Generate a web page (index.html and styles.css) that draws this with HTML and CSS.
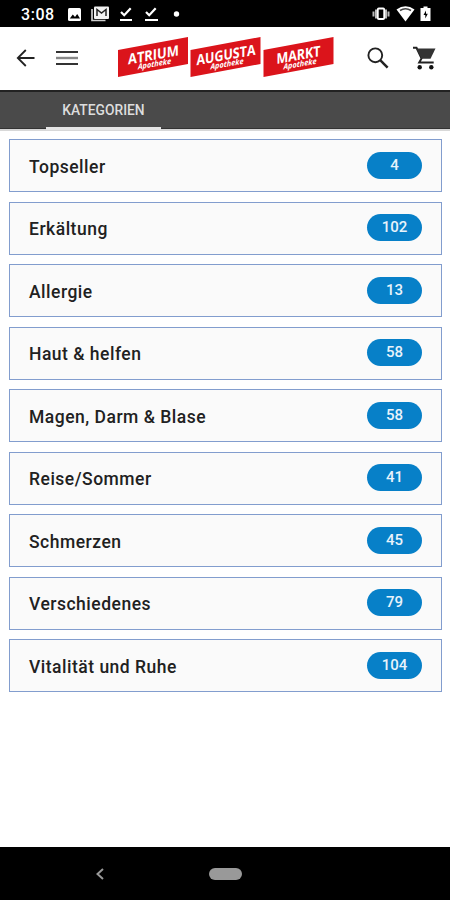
FILE: index.html
```html
<!DOCTYPE html>
<html lang="de">
<head>
<meta charset="utf-8">
<title>Kategorien</title>
<link rel="stylesheet" href="styles.css">
</head>
<body>
<div class="screen">
  <div class="status">
    <span class="clock">3:08</span>
    <svg class="status-left" width="116" height="27" viewBox="0 0 116 27">
      <rect x="1" y="8" width="13" height="13" rx="1.5" fill="#fff"/>
      <path d="M2.800 18.500l3-4 2.200 2.400 2.200-3 2.800 4.600z" fill="#000"/>
      <path d="M25 9v11.500h13.500" fill="none" stroke="#ccc" stroke-width="1.700"/>
      <rect x="27" y="6.500" width="15" height="12.500" rx="1" fill="#f2f2f2"/>
      <path d="M30 16V9.500l4.500 3.500L39 9.500V16" fill="none" stroke="#222" stroke-width="1.500"/>
      <path d="M54 12l3.200 3.200 6.500-7M53 20h12M79 12l3.200 3.200 6.500-7M78 20h13" fill="none" stroke="#fff" stroke-width="2.200"/>
      <circle cx="109.500" cy="14" r="2.700" fill="#fff"/>
    </svg>
    <svg class="status-right" width="62" height="27" viewBox="0 0 62 27">
      <path d="M2.500 11.500v5M5 9.500v9M15 9.500v9M17.500 11.500v5" stroke="#bbb" stroke-width="2"/>
      <rect x="6.800" y="8.500" width="6.400" height="10.500" rx="1" fill="#000" stroke="#fff" stroke-width="1.800"/>
      <path d="M25.500 9.500q9-6.500 18 0L34.500 21.500z" fill="#fff"/>
      <path d="M29 10.500q5.500-3.500 11 0" fill="none" stroke="#444" stroke-width="1.500"/>
      <path d="M49.500 8h3V6.500h4V8h3v13h-10z" fill="#fff"/>
      <path d="M55 10.500l-2.500 4.500h1.800v3.500l2.500-4.800h-1.800z" fill="#000"/>
    </svg>
  </div>
  <header class="toolbar">
    <svg class="back" width="20" height="20" viewBox="0 0 20 20"><path d="M18.500 10H2M9.800 2L1.800 10l8 8" fill="none" stroke="#222" stroke-width="1.800"/></svg>
    <svg class="menu" width="22" height="16" viewBox="0 0 22 16"><path d="M0 2h22M0 14h22" stroke="#333" stroke-width="1.800"/><path d="M0 8h22" stroke="#888" stroke-width="2.400"/></svg>
    <svg class="logo" width="218" height="44" viewBox="0 0 218 44">
      <g transform="translate(1 0)">
        <path d="M0 13L70 0v27L0 40z" fill="#db141b"/>
        <g transform="matrix(1 -.18 0 1 0 0)">
          <text class="brand" x="10" y="29.300" textLength="51" lengthAdjust="spacingAndGlyphs">ATRIUM</text>
          <text class="sub" x="20" y="36.200" textLength="33" lengthAdjust="spacingAndGlyphs">Apotheke</text>
        </g>
      </g>
      <g transform="translate(73.500 0)">
        <path d="M0 13L70 0v27L0 40z" fill="#db141b"/>
        <g transform="matrix(1 -.18 0 1 0 0)">
          <text class="brand" x="6" y="29.300" textLength="59" lengthAdjust="spacingAndGlyphs">AUGUSTA</text>
          <text class="sub" x="20" y="36.200" textLength="33" lengthAdjust="spacingAndGlyphs">Apotheke</text>
        </g>
      </g>
      <g transform="translate(146.500 0)">
        <path d="M0 13L70 0v27L0 40z" fill="#db141b"/>
        <g transform="matrix(1 -.18 0 1 0 0)">
          <text class="brand" x="13" y="29.300" textLength="44" lengthAdjust="spacingAndGlyphs">MARKT</text>
          <text class="sub" x="20" y="36.200" textLength="33" lengthAdjust="spacingAndGlyphs">Apotheke</text>
        </g>
      </g>
    </svg>
    <svg class="search" width="22" height="22" viewBox="0 0 22 22"><circle cx="8.300" cy="8.300" r="6.900" fill="none" stroke="#222" stroke-width="1.900"/><path d="M13.200 13.200l7.400 7.400" stroke="#222" stroke-width="2.500"/></svg>
    <svg class="cart" width="25" height="24" viewBox="0 0 25 24"><path d="M1 1.800h3.500l5 10.600-2.300 4.100h14.500" fill="none" stroke="#222" stroke-width="2"/><path d="M4.500 2.500H23.500L18.500 12.700H9.500z" fill="#333"/><circle cx="7.700" cy="21.300" r="2.200" fill="#111"/><circle cx="19.300" cy="21.300" r="2.200" fill="#111"/></svg>
  </header>
  <nav class="tabs"><div class="tab"><span>KATEGORIEN</span></div></nav>
  <main class="list">
    <div class="row"><span class="name">Topseller</span><span class="count">4</span></div>
    <div class="row"><span class="name">Erkältung</span><span class="count">102</span></div>
    <div class="row"><span class="name">Allergie</span><span class="count">13</span></div>
    <div class="row"><span class="name">Haut &amp; helfen</span><span class="count">58</span></div>
    <div class="row"><span class="name">Magen, Darm &amp; Blase</span><span class="count">58</span></div>
    <div class="row"><span class="name">Reise/Sommer</span><span class="count">41</span></div>
    <div class="row"><span class="name">Schmerzen</span><span class="count">45</span></div>
    <div class="row"><span class="name">Verschiedenes</span><span class="count">79</span></div>
    <div class="row"><span class="name">Vitalität und Ruhe</span><span class="count">104</span></div>
  </main>
  <footer class="navbar">
    <svg class="nav-back" width="10" height="14" viewBox="0 0 10 14"><path d="M8 2L2.500 7 8 12" fill="none" stroke="#999" stroke-width="2"/></svg>
    <span class="home"></span>
  </footer>
</div>
</body>
</html>
```
FILE: styles.css
```css
* { box-sizing: border-box; }
body { margin: 0; font-family: Roboto, "Liberation Sans", sans-serif; background: #fff; }
svg { display: block; flex: none; }
.screen { width: 450px; height: 900px; display: flex; flex-direction: column; overflow: hidden; }
.status { height: 27px; flex: none; background: #000; display: flex; align-items: center; padding: 0 17px 0 21px; color: #fff; }
.clock { width: 46px; font: 500 16px/27px Roboto, sans-serif; letter-spacing: 0.55px; padding-top: 2px; white-space: nowrap; }
.status-right { margin-left: auto; }
.toolbar { height: 63px; flex: none; display: flex; align-items: center; padding-left: 16px; background: #fff; }
.back { margin-top: -2px; }
.menu { margin-left: 20px; margin-top: -1px; }
.logo { margin-left: 39px; margin-top: 1px; }
.brand { font: 700 14.500px "Open Sans", sans-serif; fill: #fff; }
.sub { font: italic 700 8px "Open Sans", sans-serif; fill: #fff; }
.search { margin-left: 32px; margin-top: -1px; }
.cart { margin-left: 23px; margin-top: -1px; }
.tabs { height: 41px; flex: none; display: flex; padding-left: 46px; background: #4a4a4a; border-top: 2px solid #222; border-bottom: 2px solid #d8d8d8; box-shadow: inset 0 -1px #333; }
.tab { width: 115px; border-bottom: 3px solid #e5e5e5; margin-bottom: -1px; text-align: center; color: #ddd; font-size: 13.800px; font-weight: 500; line-height: 36px; }
.list { flex: 1; padding: 8px 8px 0 9px; display: flex; flex-direction: column; gap: 9.500px; }
.row { height: 53px; flex: none; display: flex; justify-content: space-between; align-items: center; padding: 0 19px; background: #fafafa; border: 1px solid #829dce; }
.name { font-size: 17.500px; font-weight: 500; letter-spacing: 0.5px; color: #212121; padding-top: 2px; }
.count { width: 55px; height: 27px; margin-top: -1px; border-radius: 14px; background: #0780c8; color: #e8f3fb; text-align: center; font-size: 15px; font-weight: 500; line-height: 27px; }
.navbar { height: 53px; flex: none; background: #000; display: flex; align-items: center; padding-left: 95px; }
.home { width: 33px; height: 12px; border-radius: 6px; background: #999; margin-left: 104px; }
```
